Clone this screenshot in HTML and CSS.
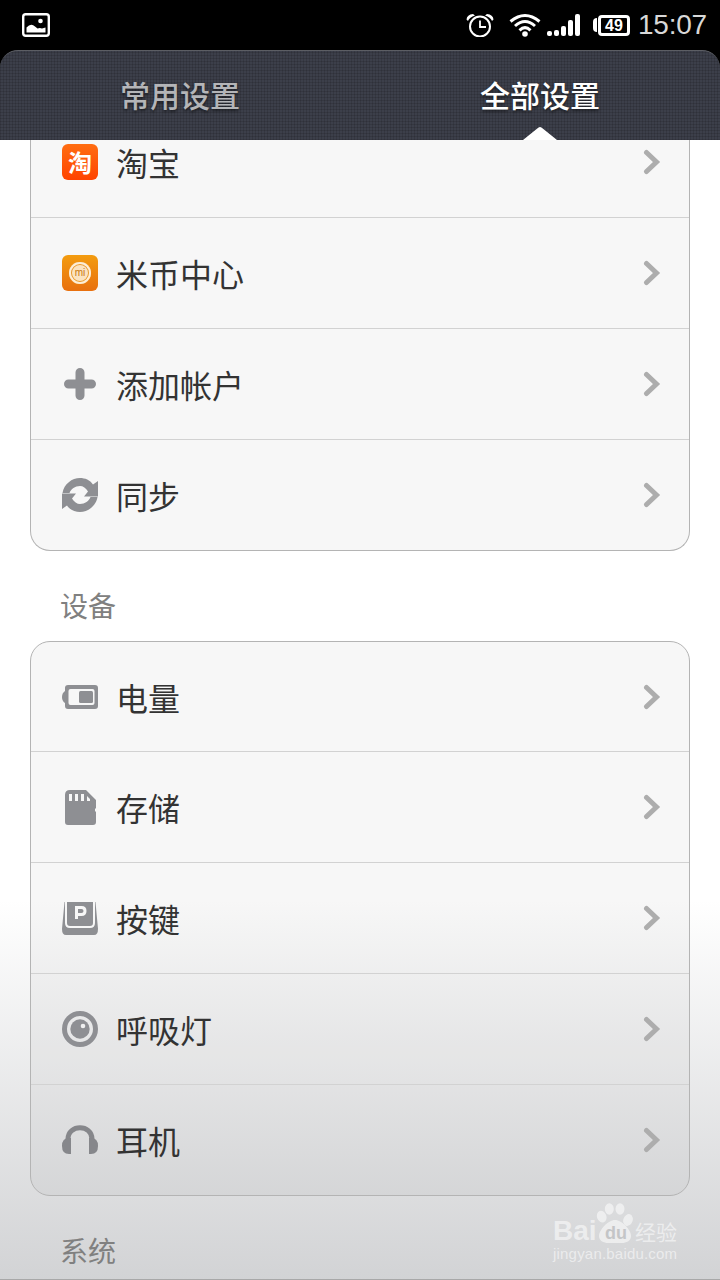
FILE: index.html
```html
<!DOCTYPE html>
<html lang="zh-CN">
<head>
  <meta charset="UTF-8">
  <meta name="viewport" content="width=device-width, initial-scale=1.0">
  <title>设置</title>
  <link rel="stylesheet" href="styles.css">
</head>
<body>
  <div class="phone">
    <div class="status-bar">
      <svg class="st-photo" width="28" height="24" viewBox="0 0 28 24">
        <rect x="1.200" y="1.200" width="25.600" height="21.600" rx="2.500" fill="none" stroke="#fff" stroke-width="2.400"/>
        <path d="M4.500 19.500V14.500Q9 9.500 13 13.500L15.500 15.500Q18 14.500 20 15.500L23.500 14.500V19.500Z" fill="#fff"/>
        <circle cx="18.500" cy="8" r="2.300" fill="#fff"/>
      </svg>
      <div class="st-right">
        <svg width="30" height="24" viewBox="0 0 30 24">
          <circle cx="15" cy="13.500" r="10" fill="none" stroke="#fff" stroke-width="2"/>
          <path d="M15 7.500V14H21" fill="none" stroke="#fff" stroke-width="1.800"/>
          <path d="M1.500 6.500Q2 1.500 8 1L10 2.500Q4.500 4 3 8Z M28.500 6.500Q28 1.500 22 1L20 2.500Q25.500 4 27 8Z" fill="#fff"/>
        </svg>
        <svg class="st-wifi" width="32" height="24" viewBox="0 0 32 24">
          <path d="M1.500 8.500Q16 -3.500 30.500 8.500M6 13Q16 4 26 13M10.500 17.300Q16 12 21.500 17.300" fill="none" stroke="#fff" stroke-width="3"/>
          <circle cx="16" cy="21" r="2.800" fill="#fff"/>
        </svg>
        <div class="st-signal">
          <i class="bar-1"></i><i class="bar-2"></i><i class="bar-3"></i><i class="bar-4"></i><i class="bar-5"></i>
        </div>
        <div class="st-battery"><span class="st-battery-cap"></span><span class="st-battery-body">49</span></div>
        <span class="st-time">15:07</span>
      </div>
    </div>

    <div class="tabs">
      <div class="tab">常用设置</div>
      <div class="tab tab-active">全部设置</div>
    </div>

    <div class="scroll">
      <div class="card card-clipped">
        <div class="row row-clipped">
          <span class="app-icon app-taobao">淘</span>
          <span class="row-text">淘宝</span>
          <svg class="chevron" width="18" height="26" viewBox="0 0 18 26"><path d="M3.500 3.500L13.500 13L3.500 22.500" /></svg>
        </div>
        <div class="row">
          <span class="app-icon app-mi"><span class="mi-coin">mi</span></span>
          <span class="row-text">米币中心</span>
          <svg class="chevron" width="18" height="26" viewBox="0 0 18 26"><path d="M3.500 3.500L13.500 13L3.500 22.500" /></svg>
        </div>
        <div class="row">
          <svg class="icon" width="36" height="36" viewBox="0 0 36 36"><path d="M18 6.500V29.500M6.500 18H29.500" stroke="#8e8f93" stroke-width="9" stroke-linecap="round"/></svg>
          <span class="row-text">添加帐户</span>
          <svg class="chevron" width="18" height="26" viewBox="0 0 18 26"><path d="M3.500 3.500L13.500 13L3.500 22.500" /></svg>
        </div>
        <div class="row">
          <svg class="icon" width="36" height="36" viewBox="0 0 36 36">
            <path d="M0.500 16C2 7 10 1 18 1C23 1 28 3 31 7.500L36 4V19.500H22L26 14.500C24 11 21 9 18 9C13 9 9 12 7.500 16Z" fill="#8e8f93"/>
            <path d="M0.500 16C2 7 10 1 18 1C23 1 28 3 31 7.500L36 4V19.500H22L26 14.500C24 11 21 9 18 9C13 9 9 12 7.500 16Z" fill="#8e8f93" transform="rotate(180 18 18)"/>
          </svg>
          <span class="row-text">同步</span>
          <svg class="chevron" width="18" height="26" viewBox="0 0 18 26"><path d="M3.500 3.500L13.500 13L3.500 22.500" /></svg>
        </div>
      </div>

      <div class="section-title">设备</div>

      <div class="card">
        <div class="row row-first">
          <svg class="icon" width="36" height="36" viewBox="0 0 36 36">
            <path d="M6 6H33Q36 6 36 9V27Q36 30 33 30H6Q3 30 3 27V24Q0 22 0 18T3 12V9Q3 6 6 6Z" fill="#8e8f93"/>
            <rect x="6.500" y="10" width="26" height="16" rx="2" fill="#f7f7f7"/>
            <rect x="17" y="12" width="14" height="12" rx="1.500" fill="#8e8f93"/>
          </svg>
          <span class="row-text">电量</span>
          <svg class="chevron" width="18" height="26" viewBox="0 0 18 26"><path d="M3.500 3.500L13.500 13L3.500 22.500" /></svg>
        </div>
        <div class="row">
          <svg class="icon" width="36" height="36" viewBox="0 0 36 36">
            <path d="M8 1H24L34 11V19L33 20V22L34 23V33Q34 36 31 36H6Q3 36 3 33V6Q3 1 8 1Z" fill="#8e8f93"/>
            <path d="M7 5H10V12H7ZM13 5H16V12H13ZM19 5H22V12H19ZM25 7L28 10V12H25Z" fill="#f7f7f7"/>
          </svg>
          <span class="row-text">存储</span>
          <svg class="chevron" width="18" height="26" viewBox="0 0 18 26"><path d="M3.500 3.500L13.500 13L3.500 22.500" /></svg>
        </div>
        <div class="row">
          <svg class="icon" width="36" height="36" viewBox="0 0 36 36">
            <path d="M2.500 2H33.500L36 29Q36 35 32 35H4Q0 35 0 29Z" fill="#8e8f93"/>
            <path d="M4 2V23Q4 27 8 27H28Q32 27 32 23V2" fill="none" stroke="#f7f7f7" stroke-width="2"/>
            <path d="M14.500 19V7.500H19.500Q23 7.500 23 11T19.500 14.500H14.500" fill="none" stroke="#f7f7f7" stroke-width="3"/>
          </svg>
          <span class="row-text">按键</span>
          <svg class="chevron" width="18" height="26" viewBox="0 0 18 26"><path d="M3.500 3.500L13.500 13L3.500 22.500" /></svg>
        </div>
        <div class="row">
          <svg class="icon" width="36" height="36" viewBox="0 0 36 36">
            <circle cx="18" cy="18" r="15.500" fill="none" stroke="#8e8f93" stroke-width="5"/>
            <circle cx="18" cy="18" r="9.700" fill="#8e8f93"/>
            <circle cx="21" cy="15" r="2.300" fill="#f0f0f0"/>
          </svg>
          <span class="row-text">呼吸灯</span>
          <svg class="chevron" width="18" height="26" viewBox="0 0 18 26"><path d="M3.500 3.500L13.500 13L3.500 22.500" /></svg>
        </div>
        <div class="row">
          <svg class="icon" width="36" height="36" viewBox="0 0 36 36">
            <path d="M6 22V17C6 2 30 2 30 17V22" fill="none" stroke="#86878b" stroke-width="5"/>
            <path d="M9 16V32H7Q0 32 0 24T7 16ZM27 16V32H29Q36 32 36 24T29 16Z" fill="#86878b"/>
          </svg>
          <span class="row-text">耳机</span>
          <svg class="chevron" width="18" height="26" viewBox="0 0 18 26"><path d="M3.500 3.500L13.500 13L3.500 22.500" /></svg>
        </div>
      </div>

      <div class="section-title">系统</div>

      <div class="watermark">
        <svg class="wm-paw" width="38" height="40" viewBox="0 0 38 40">
          <ellipse cx="5.700" cy="13.700" rx="4.700" ry="6" transform="rotate(-20 5.700 13.700)"/>
          <ellipse cx="13.300" cy="6" rx="4.500" ry="5.700"/>
          <ellipse cx="24" cy="6" rx="4.500" ry="5.700"/>
          <ellipse cx="32" cy="17" rx="4.700" ry="6" transform="rotate(20 32 17)"/>
          <path d="M19 17C26 17 35 27 35 33C35 38 30 40 26 40H12C8 40 3 38 3 33C3 27 12 17 19 17Z"/>
        </svg>
        <div class="wm-line">
          <span class="wm-bai">Bai</span><span class="wm-du">du</span><span class="wm-cn">经验</span>
        </div>
        <div class="wm-url">jingyan.baidu.com</div>
      </div>
    </div>
  </div>
</body>
</html>
```

FILE: styles.css
```css
body {
  margin: 0;
  background: #000;
  font-family: "Noto Sans CJK SC", "Noto Sans", sans-serif;
}

.phone {
  width: 720px;
  height: 1280px;
  overflow: hidden;
  background: #000;
}

/* status bar */
.status-bar {
  height: 50px;
  display: flex;
  justify-content: space-between;
  align-items: center;
  padding: 0 13px 0 22px;
  box-sizing: border-box;
}

.st-right {
  display: flex;
  align-items: center;
}

.st-wifi {
  margin-left: 14px;
}

.st-signal {
  display: flex;
  align-items: flex-end;
  gap: 2px;
  height: 22px;
  margin-left: 6px;
}

.st-signal i {
  display: block;
  width: 5px;
  background: #fff;
  border-radius: 2px;
}

.bar-1 { height: 5px; }
.bar-2 { height: 6px; }
.bar-3 { height: 10px; }
.bar-4 { height: 16px; }
.bar-5 { height: 22px; }

.st-battery {
  display: flex;
  align-items: center;
  margin-left: 13px;
}

.st-battery-cap {
  width: 4px;
  height: 14px;
  background: #fff;
  border-radius: 4px 0 0 4px;
}

.st-battery-body {
  width: 26px;
  height: 15px;
  border: 3px solid #fff;
  border-radius: 4px;
  margin-left: 1px;
  color: #fff;
  font-family: "Liberation Sans", sans-serif;
  font-size: 16px;
  font-weight: bold;
  line-height: 15px;
  text-align: center;
}

.st-time {
  margin-left: 8px;
  color: #d8d8d8;
  font-family: "Liberation Sans", sans-serif;
  font-size: 28px;
  line-height: 34px;
  letter-spacing: -0.2px;
}

/* tabs */
.tabs {
  height: 90px;
  display: flex;
  box-sizing: border-box;
  border-top: 1px solid #5c5e64;
  border-radius: 18px 18px 0 0;
  background-color: #3c3f4a;
  background-image:
    repeating-linear-gradient(90deg, rgba(0, 0, 0, 0.12) 0 1px, transparent 1px 3px),
    repeating-linear-gradient(0deg, rgba(0, 0, 0, 0.12) 0 1px, transparent 1px 3px);
}

.tab {
  flex: 1;
  position: relative;
  text-align: center;
  color: #b4b5b8;
  font-size: 30px;
  font-weight: 500;
  line-height: 86px;
  text-shadow: 0 2px 3px rgba(0, 0, 0, 0.5);
}

.tab-active {
  color: #fff;
}

.tab-active::after {
  content: "";
  position: absolute;
  left: 163px;
  bottom: 0;
  width: 34px;
  height: 13px;
  background: #fff;
  clip-path: polygon(0 100%, 42% 12%, 46% 3%, 50% 0, 54% 3%, 58% 12%, 100% 100%);
}

/* list */
.scroll {
  position: relative;
  box-sizing: border-box;
  height: 1140px;
  overflow: hidden;
  padding: 0 30px;
  border-bottom: 1px solid #a8a8a8;
  background: linear-gradient(#fff 0, #fff 760px, #d2d3d5 1140px);
}

.card {
  border: 1px solid #b4b4b4;
  border-radius: 20px;
  background: rgba(110, 110, 110, 0.055);
}

.card-clipped {
  border-top: none;
  border-radius: 0 0 20px 20px;
}

.row {
  height: 110px;
  display: flex;
  align-items: center;
  padding: 0 28px 0 31px;
  border-top: 1px solid #d2d2d2;
}

.row-clipped {
  height: 44px;
  padding-bottom: 33px;
  border-top: none;
}

.row-first {
  height: 109px;
  border-top: none;
}

.icon,
.app-icon {
  width: 36px;
  height: 36px;
  flex-shrink: 0;
}

.app-icon {
  display: flex;
  align-items: center;
  justify-content: center;
  border-radius: 6px;
}

.app-taobao {
  background: linear-gradient(#ff6d12, #ff4300);
  color: #fff;
  font-size: 24px;
  font-weight: bold;
  line-height: 36px;
}

.app-mi {
  background: linear-gradient(#f39c0f, #e8700f);
}

.mi-coin {
  width: 22px;
  height: 22px;
  border-radius: 50%;
  background: #fbe3c0;
  color: #c9780f;
  font-family: "Liberation Sans", sans-serif;
  font-size: 10px;
  line-height: 21px;
  text-align: center;
  box-shadow: inset 0 0 0 2px #fdeed8, inset 0 0 0 3px #e89a2c;
}

.row-text {
  flex: 1;
  margin-left: 18px;
  color: #333;
  font-size: 32px;
  line-height: 40px;
}

.chevron {
  flex-shrink: 0;
}

.chevron path {
  fill: none;
  stroke: #adadad;
  stroke-width: 5;
  stroke-linecap: round;
}

.section-title {
  height: 90px;
  padding-left: 30px;
  color: #808080;
  font-size: 28px;
  line-height: 108px;
}

/* watermark */
.watermark {
  position: absolute;
  right: 41px;
  bottom: 15px;
  width: 126px;
  color: rgba(255, 255, 255, 0.55);
  font-family: "Liberation Sans", sans-serif;
}

.wm-paw {
  position: absolute;
  left: 43px;
  top: -15px;
  fill: #fff;
  opacity: 0.55;
}

.wm-line {
  position: relative;
  display: flex;
  align-items: center;
  height: 26px;
  white-space: nowrap;
}

.wm-bai {
  font-size: 28px;
  font-weight: bold;
}

.wm-du {
  position: absolute;
  left: 52px;
  top: 5px;
  color: #c4c5c7;
  font-size: 18px;
  font-weight: bold;
  line-height: 20px;
}

.wm-cn {
  position: absolute;
  left: 82px;
  top: 0;
  font-family: "Noto Sans CJK SC", sans-serif;
  font-size: 21px;
  line-height: 26px;
}

.wm-url {
  font-size: 15px;
  line-height: 20px;
  letter-spacing: 0.2px;
  white-space: nowrap;
}
```
